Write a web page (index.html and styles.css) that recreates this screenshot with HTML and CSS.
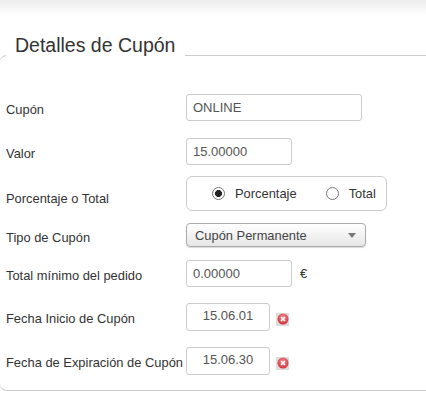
FILE: index.html
```html
<!DOCTYPE html>
<html lang="es">
<head>
  <meta charset="UTF-8" />
  <title>Detalles de Cupón</title>
  <link rel="stylesheet" href="styles.css">
</head>
<body>

<div class="top-shade"></div>

<fieldset class="panel">
  <legend>Detalles de Cupón</legend>

  <div class="row row-code">
    <label>Cupón</label>
    <input type="text" class="field field-long" value="ONLINE" />
  </div>

  <div class="row row-value">
    <label>Valor</label>
    <input type="text" class="field field-mid" value="15.00000" />
  </div>

  <div class="row row-type">
    <label>Porcentaje o Total</label>
    <div class="radio-box">
      <span class="radio radio-on"></span>
      <span class="radio-label">Porcentaje</span>
      <span class="radio"></span>
      <span class="radio-label">Total</span>
    </div>
  </div>

  <div class="row row-select">
    <label>Tipo de Cupón</label>
    <div class="select">
      <span>Cupón Permanente</span>
      <span class="caret"></span>
    </div>
  </div>

  <div class="row row-min">
    <label>Total mínimo del pedido</label>
    <input type="text" class="field field-mid" value="0.00000" />
    <span class="unit">€</span>
  </div>

  <div class="row row-start">
    <label>Fecha Inicio de Cupón</label>
    <input type="text" class="field field-date" value="15.06.01" />
    <span class="clear-btn">
      <svg width="12" height="12" viewBox="0 0 12 12"><defs><radialGradient id="red" cx="50%" cy="35%" r="65%"><stop offset="0" stop-color="#f58a90"/><stop offset="1" stop-color="#d2303c"/></radialGradient></defs><circle cx="6" cy="6" r="5.5" fill="url(#red)"/><path d="M4 4l4 4M8 4l-4 4" stroke="#fff" stroke-width="1.7"/></svg>
    </span>
  </div>

  <div class="row row-end">
    <label>Fecha de Expiración de Cupón</label>
    <input type="text" class="field field-date" value="15.06.30" />
    <span class="clear-btn">
      <svg width="12" height="12" viewBox="0 0 12 12"><circle cx="6" cy="6" r="5.5" fill="url(#red)"/><path d="M4 4l4 4M8 4l-4 4" stroke="#fff" stroke-width="1.7"/></svg>
    </span>
  </div>
</fieldset>

</body>
</html>
```

FILE: styles.css
```css
html, body { height: 100%; }
body {
  font-family: "Liberation Sans", Arial, sans-serif;
  font-size: 12.9px;
  color: #333;
  background: #fff;
  margin: 0; padding: 0;
  overflow: hidden;
}
.top-shade {
  height: 16px;
  background: linear-gradient(#ececec, #fff);
  margin-bottom: 17px;
}
.panel {
  box-sizing: border-box;
  width: 440px; height: 358px;
  margin: 0 0 0 -1px; padding: 0 0 0 6px;
  border: 1px solid #ccc;
  border-left-color: #e4e4e4;
  border-radius: 8px;
}
legend {
  font-size: 19.5px; line-height: 24px;
  color: #333;
  margin-left: 0;
  padding: 0 10px 20px 9px;
}
.row { display: flex; align-items: center; }
.row label { width: 180px; flex: none; white-space: nowrap; margin-top: 4px; }
.row-type label { margin-top: 10px; }
.row-start label, .row-end label { margin-top: 3px; }
.row-code { margin-top: 17px; }
.row-value { margin-top: 17px; }
.row-type { margin-top: 11px; }
.row-select { margin-top: 12px; }
.row-min { margin-top: 13px; }
.row-start { margin-top: 16px; }
.row-end { margin-top: 16px; }

.field {
  box-sizing: border-box;
  height: 27px;
  margin: 0; padding: 0 6px;
  border: 1px solid #ccc; border-radius: 3px;
  font: 13px "Liberation Sans", Arial, sans-serif;
  color: #555;
  background: #fff;
}
.field-long { width: 176px; }
.field-mid { width: 106px; }
.field-date { width: 84px; height: 28px; text-align: center; padding-bottom: 3px; }

.radio-box {
  box-sizing: border-box;
  width: 201px; height: 35px;
  padding: 0 0 0 25px;
  display: flex; align-items: center;
  border: 1px solid #ccc; border-radius: 6px;
}
.radio {
  box-sizing: border-box;
  width: 13px; height: 13px;
  flex: none;
  border: 1px solid #777; border-radius: 50%;
  background: #fff;
}
.radio-on {
  background: radial-gradient(circle, #222 0, #222 3.2px, #fff 3.8px);
}
.radio-label { margin-left: 10px; margin-right: 29px; }
.radio-label:last-child { margin-right: 0; }

.select {
  box-sizing: border-box;
  width: 180px; height: 24px;
  padding: 0 8px;
  display: flex; align-items: center; justify-content: space-between;
  border: 1px solid #aaa; border-radius: 4px;
  background: linear-gradient(#fff, #e6e6e6);
  box-shadow: 0 1px 1px rgba(0,0,0,0.15);
  color: #444;
}
.caret {
  width: 0; height: 0;
  border-left: 4px solid transparent;
  border-right: 4px solid transparent;
  border-top: 5px solid #777;
  margin-right: 1px;
}
.unit { margin-left: 8px; }
.clear-btn {
  width: 13px; height: 13px;
  margin: 4px 0 0 6px;
  display: flex; align-items: center; justify-content: center;
  background: #ddd;
}
```
